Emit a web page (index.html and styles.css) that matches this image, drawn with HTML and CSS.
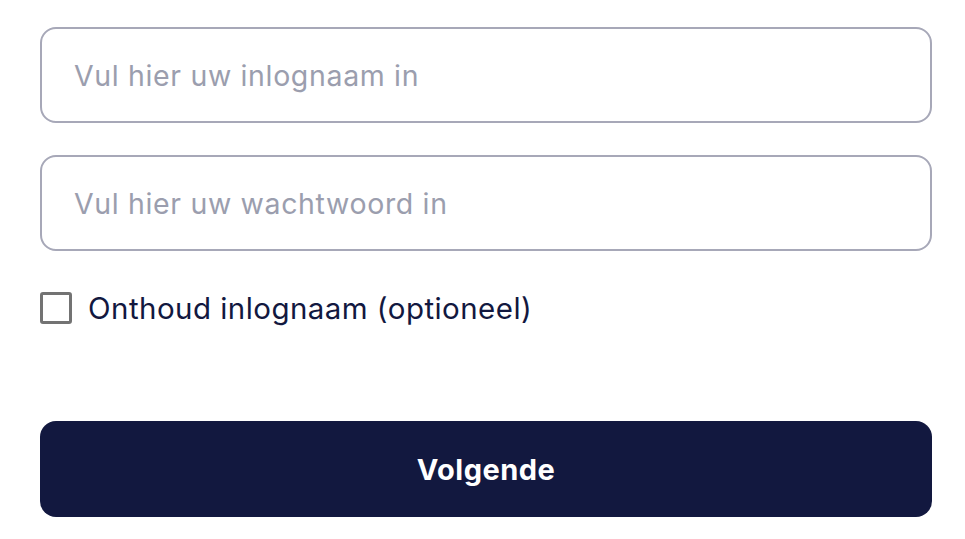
FILE: index.html
```html
<!DOCTYPE html>
<html lang="nl">
<head>
<meta charset="utf-8">
<link rel="stylesheet" href="styles.css">
</head>
<body>
<form class="login">
  <input class="field" type="text" placeholder="Vul hier uw inlognaam in">
  <input class="field" type="password" placeholder="Vul hier uw wachtwoord in">
  <label class="remember"><span class="box"></span><span class="label-text">Onthoud inlognaam (optioneel)</span></label>
  <button class="next" type="button">Volgende</button>
</form>
</body>
</html>
```
FILE: styles.css
```css
html, body {
  margin: 0;
  padding: 0;
  background: #ffffff;
}
body {
  font-family: Inter, "Liberation Sans", sans-serif;
}
.login {
  width: 892px;
  margin: 27px 0 0 40px;
  display: flex;
  flex-direction: column;
}
.field {
  box-sizing: border-box;
  height: 96px;
  border: 2px solid #a7a8b8;
  border-radius: 16px;
  padding: 0 32px;
  font-family: inherit;
  font-size: 28.5px;
  letter-spacing: 0.65px;
  color: #12183f;
  background: #fff;
  outline: none;
  margin-bottom: 32px;
}
.field::placeholder {
  color: #9b9eae;
}
.field + .field {
  margin-bottom: 0;
}
.remember {
  display: flex;
  align-items: center;
  gap: 16px;
  margin-top: 41px;
  height: 32px;
}
.box {
  box-sizing: border-box;
  width: 32px;
  height: 32px;
  border: 3px solid #737373;
  border-radius: 3px;
}
.label-text {
  font-size: 29.5px;
  letter-spacing: 0.45px;
  color: #12183f;
}
.next {
  margin-top: 97px;
  height: 96px;
  border: none;
  border-radius: 16px;
  background: #12183f;
  color: #fff;
  font-family: inherit;
  font-size: 29px;
  letter-spacing: 0.5px;
  font-weight: 700;
}
```
